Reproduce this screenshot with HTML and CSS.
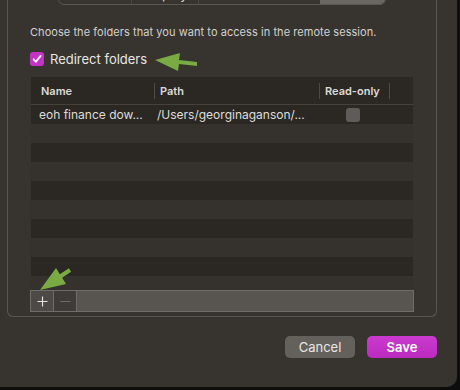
FILE: index.html
```html
<!DOCTYPE html>
<html lang="en">
<head>
    <meta charset="UTF-8">
    <title>Folders</title>
    <link rel="stylesheet" href="styles.css">
</head>
<body>
    <div class="window">
        <div class="group">
            <div class="tabs">
                <span class="tab tab-general">General</span>
                <span class="tab tab-display">Display</span>
                <span class="tab tab-devices">Devices &amp; Audio</span>
                <span class="tab tab-folders">Folders</span>
            </div>

            <p class="hint">Choose the folders that you want to access in the remote session.</p>

            <label class="redirect">
                <span class="check">
                    <svg width="14" height="14" viewBox="0 0 14 14"><path d="M3.6 7.3 L6 9.8 L10.6 3.9" fill="none" stroke="#fff" stroke-width="1.8" stroke-linecap="round" stroke-linejoin="round"/></svg>
                </span>
                Redirect folders
            </label>

            <div class="table">
                <div class="thead">
                    <div class="th th-name">Name</div>
                    <div class="th th-path">Path</div>
                    <div class="th th-ro">Read-only</div>
                </div>
                <div class="row">
                    <div class="td td-name">eoh finance dow...</div>
                    <div class="td td-path">/Users/georginaganson/...</div>
                    <div class="td td-ro"><span class="box"></span></div>
                </div>
                <div class="row"></div>
                <div class="row"></div>
                <div class="row"></div>
                <div class="row"></div>
                <div class="row"></div>
                <div class="row"></div>
                <div class="row"></div>
                <div class="row"></div>
                <div class="row"></div>
            </div>

            <div class="toolbar">
                <span class="tool tool-add">
                    <svg width="11" height="11" viewBox="0 0 11 11"><path d="M5.5 0.5 V10.5 M0.5 5.5 H10.5" stroke="#e4e2df" stroke-width="1.2"/></svg>
                </span>
                <span class="tool tool-remove">
                    <svg width="11" height="11" viewBox="0 0 11 11"><path d="M0.5 5.5 H10.5" stroke="#6d6a66" stroke-width="1.2"/></svg>
                </span>
                <span class="tool-fill"></span>
            </div>
        </div>

        <div class="actions">
            <button class="btn btn-cancel">Cancel</button>
            <button class="btn btn-save">Save</button>
        </div>

        <!-- annotation arrows drawn over the screenshot -->
        <svg class="annot" width="460" height="390" viewBox="0 0 460 390">
            <polygon points="155,60 180,53 179,60 197,62 197,66 179,64 178,71" fill="#79aa44"/>
            <polygon points="40,290 56,268 59.9,274.3 68.9,268.3 71.1,271.7 62.1,277.7 66,284" fill="#79aa44"/>
        </svg>
    </div>
</body>
</html>
```

FILE: styles.css
```css
body {
    margin: 0;
    background: #0e0d0d;
    font-family: Inter, "Liberation Sans", Arial, sans-serif;
    font-size: 13px;
    color: #e6e4e1;
}

.window {
    position: relative;
    width: 457px;
    height: 387px;
    background: #37342f;
    border-bottom-right-radius: 10px;
    overflow: hidden;
}

.group {
    box-sizing: border-box;
    margin-left: 7px;
    width: 430px;
    height: 334px;
    padding-left: 22px;
    border: 1px solid #5a5753;
    border-top: none;
    border-radius: 0 0 6px 6px;
}

/* segmented control, mostly cut off at the top */
.tabs {
    box-sizing: border-box;
    display: flex;
    width: 328px;
    height: 22px;
    margin: -17px 0 0 28px;
    border: 1px solid #5b5854;
    border-radius: 6px;
    overflow: hidden;
}

.tab {
    display: flex;
    align-items: center;
    justify-content: center;
    font-size: 13px;
    color: #e0deda;
    border-left: 1px solid #4a4743;
}

.tab-general { width: 72px; border-left: none; }
.tab-display { width: 66px; }
.tab-devices { width: 121px; }
.tab-folders { flex: 1; background: #6a6763; border-left: none; }

.hint {
    margin: 20px 0 0;
    font-size: 11px;
    line-height: 14px;
    letter-spacing: 0.06px;
    color: #d3d1ce;
}

.redirect {
    display: flex;
    align-items: center;
    gap: 6px;
    height: 16px;
    margin-top: 12px;
    font-size: 13px;
    color: #e8e6e3;
}

.check {
    display: flex;
    width: 14px;
    height: 14px;
    border-radius: 3px;
    background: #c233c6;
}

.table {
    width: 382px;
    height: 213px;
    margin: 10px 0 0 1px;
    background: #35322e;
    overflow: hidden;
}

.thead {
    box-sizing: border-box;
    display: flex;
    align-items: center;
    height: 28px;
    background: #2b2824;
    border-bottom: 1px solid #45423e;
}

.th {
    box-sizing: border-box;
    height: 16px;
    line-height: 16px;
    font-size: 11px;
    font-weight: 600;
    color: #dcdad7;
    border-right: 1px solid #4d4a46;
}

.th-name { width: 124px; padding-left: 10px; }
.th-path { width: 165px; padding-left: 5px; }
.th-ro { width: 70px; padding-left: 5px; }

.row {
    display: flex;
    align-items: center;
    height: 19px;
    background: #35322e;
}

.row:nth-child(even) {
    background: #2b2824;
}

.td {
    box-sizing: border-box;
    font-size: 12px;
    color: #dedcd9;
    white-space: nowrap;
}

.td-name { width: 124px; padding-left: 8px; }
.td-path { width: 165px; padding-left: 2px; }
.td-ro { width: 70px; padding-left: 26px; display: flex; }

.box {
    width: 14px;
    height: 14px;
    border-radius: 3px;
    background: #5e5b58;
}

.toolbar {
    box-sizing: border-box;
    display: flex;
    width: 384px;
    height: 22px;
    border: 1px solid #6f6c69;
}

.tool {
    box-sizing: border-box;
    display: flex;
    align-items: center;
    justify-content: center;
    width: 23px;
    border-right: 1px solid #6f6c69;
}

.tool-add { background: #4c4946; }
.tool-remove { background: #3e3b38; }

.tool-fill {
    flex: 1;
    background: #585551;
}

.actions {
    display: flex;
    justify-content: flex-end;
    gap: 12px;
    margin-top: 19px;
    padding-right: 20px;
}

.btn {
    width: 70px;
    height: 22px;
    border: none;
    border-radius: 5px;
    font-family: Inter, "Liberation Sans", Arial, sans-serif;
    font-size: 13px;
    padding: 0;
}

.btn-cancel {
    background: #64615d;
    color: #e8e6e3;
}

.btn-save {
    background: linear-gradient(#ca3acf, #bc2bc0);
    color: #fff;
    font-weight: 600;
}

.annot {
    position: absolute;
    top: 0;
    left: 0;
    pointer-events: none;
}
```
